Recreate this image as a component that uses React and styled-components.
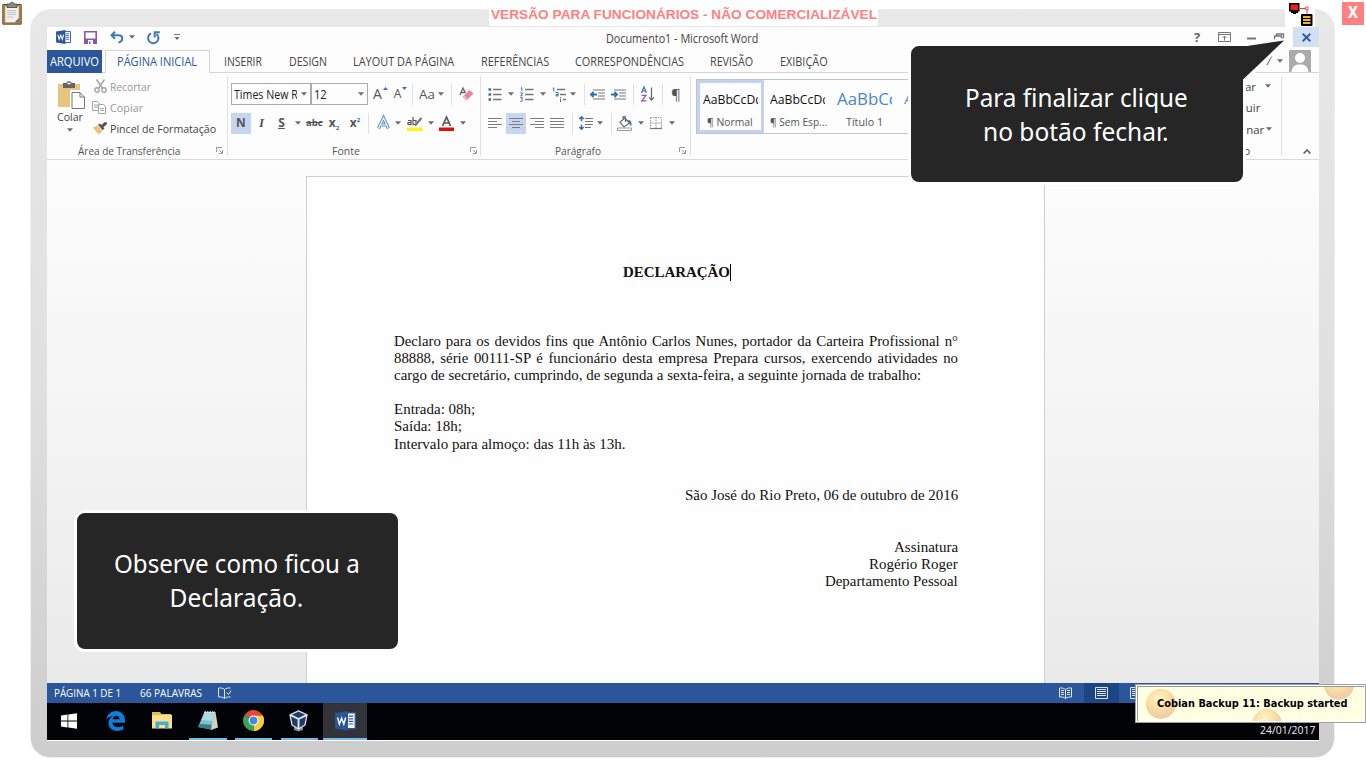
import React, { useLayoutEffect, useRef } from "react";
import styled, { createGlobalStyle } from "styled-components";

const Global = createGlobalStyle`
  * { box-sizing: border-box; }
  body { margin: 0; background: #fff; overflow: hidden; font-family: "Open Sans", "Noto Sans", sans-serif; }
  svg { display: block; flex: none; overflow: visible; }
`;

/* ---------- text fitted to a fixed measure ---------- */
const FitBox = styled.span`
  display: block;
  flex: none;
  width: ${(p) => p.$w}px;
  margin-left: ${(p) => p.$gap || 0}px;
  font-size: ${(p) => p.$size || 12}px;
  color: ${(p) => p.$color || "inherit"};
  white-space: nowrap;
`;
const FitInner = styled.span`
  display: inline-block;
  transform-origin: 0 50%;
`;
function Fit({ w, gap, size, color, children }) {
  const ref = useRef(null);
  useLayoutEffect(() => {
    const el = ref.current;
    el.style.transform = `scaleX(${w / el.offsetWidth})`;
  }, [w]);
  return (
    <FitBox $w={w} $gap={gap} $size={size} $color={color}>
      <FitInner ref={ref}>{children}</FitInner>
    </FitBox>
  );
}

/* ---------- frame ---------- */
const Desktop = styled.div`
  position: relative;
  width: 1366px;
  height: 768px;
  padding: 9px 31px 10px 30px;
  background: #fff;
  overflow: hidden;
`;
const Bezel = styled.div`
  height: 749px;
  padding: 17px 15px 16px 16px;
  border: 1px solid #efefef;
  border-radius: 20px;
  background: linear-gradient(#e8e8e8, #e0e0e0 50%, #cdcdcd);
`;
const Screen = styled.div`
  display: flex;
  flex-direction: column;
  width: 1272px;
  height: 714px;
  background: #fdfdfd;
  border-bottom: 1px solid #fff;
`;
const Row = styled.div`
  display: flex;
  align-items: center;
  height: ${(p) => p.$h || 22}px;
  margin-top: ${(p) => p.$top || 0}px;
`;
const Slot = styled.span`
  display: flex;
  flex: none;
  align-items: center;
  justify-content: center;
  width: ${(p) => p.$w}px;
  height: ${(p) => p.$h || 22}px;
  margin-left: ${(p) => p.$gap || 0}px;
  background: ${(p) => p.$bg || "transparent"};
`;
const Rule = styled.i`
  flex: none;
  width: 1px;
  height: ${(p) => p.$h || 21}px;
  margin-left: ${(p) => p.$gap}px;
  background: #e1e1e1;
`;
const Caret = styled.i`
  flex: none;
  width: 6px;
  height: 3.5px;
  margin-left: ${(p) => p.$gap || 0}px;
  margin-right: -1px;
  background: #6d6d6d;
  clip-path: polygon(0 0, 100% 0, 50% 100%);
`;
const Spacer = styled.span`
  flex: 1;
`;

/* ---------- title bar and tabs ---------- */
const TitleBar = styled.header`
  display: flex;
  align-items: center;
  height: 23px;
  padding-bottom: 3px;
  color: #444;
`;
const TitleText = styled.div`
  padding-top: 3px;
`;
const Help = styled.b`
  width: 10px;
  margin-left: 436px;
  font-size: 13px;
  line-height: 18px;
  color: #666;
`;
const CloseCell = styled.span`
  display: flex;
  align-items: center;
  justify-content: center;
  width: 26px;
  height: 20px;
  margin-left: auto;
  background: #d3e0f3;
`;
const Tabs = styled.nav`
  display: flex;
  height: 23px;
  color: #444;
  align-items: center;
  border-bottom: 1px solid #d5d5d5;
`;
const FileTab = styled.div`
  width: 55px;
  height: 23px;
  padding: 3px 0 0 3px;
  margin-bottom: -1px;
  background: #2b579a;
  color: #fff;
`;
const ActiveTab = styled.div`
  width: 105px;
  height: 23px;
  margin: 0 0 -1px 3px;
  padding: 2px 0 0 11px;
  border: 1px solid #d5d5d5;
  border-bottom: 0;
  background: #fdfdfd;
  color: #2b579a;
`;
const Avatar = styled.span`
  width: 22px;
  height: 22px;
  margin-left: 7px;
  margin-right: 8px;
  background: #ababab;
`;

/* ---------- ribbon ---------- */
const Ribbon = styled.section`
  display: flex;
  height: 87px;
  border-bottom: 1px solid #d9d9d9;
  color: #555;
`;
const Group = styled.div`
  flex: none;
  width: ${(p) => p.$w}px;
  height: 80px;
  margin-top: 3px;
  border-right: 1px solid ${(p) => (p.$open ? "transparent" : "#e1e1e1")};
`;
const Clip = styled.div`
  display: flex;
  height: 65px;
`;
const Paste = styled.div`
  display: flex;
  flex-direction: column;
  width: 45px;
  padding-top: 4px;
  color: #444;
`;
const ClipList = styled.div`
  display: flex;
  flex-direction: column;
`;
const Combo = styled.span`
  display: flex;
  align-items: center;
  flex: none;
  width: ${(p) => p.$w}px;
  height: 22px;
  margin-left: ${(p) => p.$gap}px;
  padding-left: 2px;
  border: 1px solid #ababab;
  color: #222;
`;
const Cut = styled.span`
  display: block;
  overflow: hidden;
  width: ${(p) => p.$w}px;
`;
const Glyph = styled.span`
  flex: none;
  display: block;
  width: ${(p) => p.$w}px;
  margin-left: ${(p) => p.$gap || 0}px;
  font: ${(p) => p.$font || '14px "Open Sans", sans-serif'};
  line-height: 20px;
  text-align: center;
  white-space: nowrap;
  color: ${(p) => p.$color || "#555"};
  text-decoration: ${(p) => p.$deco || "none"};
  sub, sup { font-size: 6px; color: #2b6cb0; line-height: 0; }
`;
const Gallery = styled.div`
  display: flex;
  width: 480px;
  height: 55px;
  margin: 3px 0 0 5px;
  border: 1px solid #bfc5cf;
`;
const StyleCell = styled.div`
  flex: none;
  width: 67px;
  height: 53px;
  border: ${(p) => (p.$active ? "3px solid #c3d3ee" : "0 solid transparent")};
  padding: ${(p) => (p.$active ? "5px 0 0 3px" : "8px 0 0 6px")};
`;
const Sample = styled.div`
  overflow: hidden;
  width: 55px;
  height: 23px;
  line-height: 23px;
  color: ${(p) => p.$color || "#111"};
`;
const StyleName = styled.div`
  padding-left: ${(p) => p.$pad || 0}px;
  line-height: 18px;
  margin-top: 2px;
`;
const EditGroup = styled.div`
  flex: none;
  width: 105px;
  height: 80px;
  margin-top: 3px;
  border-right: 1px solid #e1e1e1;
  color: #444;
`;

/* ---------- document ---------- */
const Workspace = styled.main`
  display: flex;
  height: 523px;
  padding: 16px 0 0 259px;
  background: linear-gradient(#fdfdfd, #f5f5f5 45%, #eaeaea);
`;
const Page = styled.article`
  width: 739px;
  height: 507px;
  padding: 87px 86px 0 87px;
  border: 1px solid #cfcfcf;
  border-bottom: 0;
  background: #fefefe;
  font-family: "Liberation Serif", serif;
  color: #111;
`;
const Line = styled.div`
  display: flex;
  align-items: center;
  justify-content: ${(p) => p.$align || "flex-start"};
  height: 17.16px;
  line-height: 17px;
  font-weight: ${(p) => (p.$bold ? 700 : 400)};
`;
const Justified = styled.div`
  height: 17.16px;
  line-height: 17px;
  font-size: 14.8px;
  text-align-last: justify;
  white-space: nowrap;
`;
const TextCursor = styled.i`
  width: 1px;
  height: 17px;
  background: #000;
`;

/* ---------- status bar and taskbar ---------- */
const Status = styled.footer`
  display: flex;
  align-items: center;
  height: 20px;
  padding-bottom: 1px;
  background: #2b579a;
  color: #fff;
`;
const ViewSlot = styled(Slot)`
  margin-bottom: -1px;
`;
const Taskbar = styled.footer`
  display: flex;
  height: 37px;
  background: #020307;
`;
const Task = styled.span`
  display: flex;
  align-items: center;
  justify-content: center;
  width: ${(p) => p.$w}px;
  padding-right: ${(p) => p.$shift || 0}px;
  margin-left: ${(p) => p.$gap || 0}px;
  background: ${(p) => (p.$active ? "#323439" : "transparent")};
  border-bottom: 2px solid ${(p) => (p.$run ? "#76b9ed" : "transparent")};
`;
const Clock = styled.div`
  margin-left: auto;
  padding: 19px 4px 0 0;
  color: #eee;
  line-height: 16px;
`;

/* ---------- overlays ---------- */
const Banner = styled.div`
  position: absolute;
  left: 489px;
  top: 6px;
  width: 389px;
  height: 20px;
  padding-left: 2px;
  background: #fff;
  font: 700 14px/17px "Liberation Sans", sans-serif;
  color: #ff8080;
`;
const Corner = styled.div`
  position: absolute;
  left: ${(p) => p.$x}px;
  top: ${(p) => p.$y}px;
  width: ${(p) => p.$w}px;
  height: ${(p) => p.$h}px;
  background: ${(p) => p.$bg || "transparent"};
  color: #fff;
  font: 700 15px/22px "DejaVu Sans Condensed", "DejaVu Sans", sans-serif;
  text-align: center;
`;
const Callout = styled.aside`
  position: absolute;
  left: ${(p) => p.$x}px;
  top: ${(p) => p.$y}px;
  width: ${(p) => p.$w}px;
  height: ${(p) => p.$h}px;
  display: flex;
  flex-direction: column;
  align-items: center;
  padding-top: ${(p) => p.$pad}px;
  padding-right: 2px;
  border: 3px solid #fff;
  border-radius: 11px;
  background: #262626;
  color: #fff;
  font-family: "Noto Sans", "Open Sans", sans-serif;
  font-variant-ligatures: common-ligatures;
  line-height: 33.5px;
`;
const Tail = styled.svg`
  position: absolute;
  left: 1230px;
  top: 36px;
`;
const Notice = styled.div`
  position: absolute;
  left: 1135px;
  top: 684px;
  width: 231px;
  height: 39px;
  border: 1px solid #a0a0a0;
  background: #fff;
  padding: 1px;
`;
const NoticeBody = styled.div`
  position: relative;
  display: flex;
  align-items: center;
  height: 35px;
  padding: 0 0 1px 19px;
  overflow: hidden;
  border-top: 1px solid #999;
  border-left: 1px solid #999;
  background: #ffffe1;
  color: #000;
  font-family: "DejaVu Sans", sans-serif;
  font-weight: 700;
`;
const Ball = styled.i`
  position: absolute;
  left: ${(p) => p.$x}px;
  top: ${(p) => p.$y}px;
  width: 30px;
  height: 30px;
  border-radius: 50%;
  background: radial-gradient(circle at 42% 32%, #fff6cc, #fbe0a4 35%, #efd0a8 65%, #e2cebf);
`;
const Above = styled.div`
  position: relative;
`;

/* ---------- icons ---------- */
const WordIcon = ({ s = 15 }) => (
  <svg width={s} height={s * 0.93} viewBox="0 0 16 15">
    <path d="M8 1.500h7.500v12H8z" fill="#fff" stroke="#2b579a" />
    <path d="M10.500 4h3.500M10.500 6h3.500M10.500 8h3.500M10.500 10h3.500" stroke="#2b579a" strokeWidth=".9" />
    <path d="M0 1.500L10 0v15L0 13.500z" fill="#2b579a" />
    <path d="M1.900 5L3.300 10 5 5.500 6.700 10 8.100 5" fill="none" stroke="#fff" strokeWidth="1.100" />
  </svg>
);
const SaveIcon = () => (
  <svg width="13" height="13" viewBox="0 0 13 13">
    <path d="M.8.8h11.4v11.4H.8z" fill="#fff" stroke="#8a56ac" strokeWidth="1.600" />
    <path d="M1 7.500h11v4.700H1z" fill="#8a56ac" />
    <path d="M4 9h5v4H4z" fill="#fff" />
    <path d="M5 10.500h1.500V13H5z" fill="#8a56ac" />
  </svg>
);
const UndoIcon = () => (
  <svg width="14" height="13" viewBox="0 0 14 13" fill="none" stroke="#3f78b5" strokeWidth="2">
    <path d="M5 .8L1.500 4.300 5 7.800M2 4.300h6.500c5 0 5 6 0 7.200" />
  </svg>
);
const RedoIcon = () => (
  <svg width="14" height="13" viewBox="0 0 14 13" fill="none" stroke="#3f78b5" strokeWidth="2">
    <path d="M4 2.400A5.200 5.200 0 1 0 9.500 3M7.700 6.500V1.300H12.800" />
  </svg>
);
const ListIcon = ({ kind }) => (
  <svg width="14" height="15" viewBox="0 0 14 15">
    <path
      d={kind === "multi" ? "M5 2.500h8M8 7.500h6M11 12.500h3" : "M5 2.500h8.500M5 7.500h8.500M5 12.500h8.500"}
      stroke="#777" strokeWidth="1.300" />
    {kind === "bullet" && <path d="M.5 1.200h2.600v2.600H.5zM.5 6.200h2.600v2.600H.5zM.5 11.200h2.600v2.600H.5z" fill="#3b6ea8" />}
    {kind === "number" && (
      <path d="M.8 1.200l1-.6v3.400M.3 5.800h2v1.500l-1.700 1.500h2M.3 10.700h2.200L1.500 12.200l1 .6-.6 1.500H.3" fill="none" stroke="#3b6ea8" />
    )}
    {kind === "multi" && (
      <path d="M.8 1.500l1-.7v3.700M4 5.500h2v3.500H4V7.500h2M8.500 10v1M8.500 12v3" fill="none" stroke="#3b6ea8" />
    )}
  </svg>
);
const AlignIcon = ({ d }) => (
  <svg width="14" height="12" viewBox="0 0 14 12" stroke="#7d7d7d" strokeWidth="1.200">
    <path d={d} />
  </svg>
);
const IndentIcon = ({ right }) => (
  <svg width="15" height="11" viewBox="0 0 15 11" fill="none">
    <path d="M3 1h12M8 4h7M8 7h7M3 10h12" stroke="#777" strokeWidth="1.200" />
    <path d={right ? "M0 5.500h6M3.500 3L6 5.500 3.500 8" : "M7 5.500H1M3.500 3L1 5.500 3.500 8"} stroke="#2f6fb0" strokeWidth="1.900" />
  </svg>
);
const SortIcon = () => (
  <svg width="14" height="16" viewBox="0 0 14 16" fill="none">
    <path d="M.5 7L3 .8 5.500 7M1.300 5h3.400" stroke="#3b6ea8" strokeWidth="1.200" />
    <path d="M.8 9.300h4.200L.8 14.800h4.500" stroke="#9b4fb0" strokeWidth="1.300" />
    <path d="M10.500 1.500V14M8 11.300l2.500 2.700 2.500-2.700" stroke="#666" strokeWidth="1.200" />
  </svg>
);
const SpacingIcon = () => (
  <svg width="14" height="14" viewBox="0 0 14 14" fill="none">
    <path d="M6 2.500h8M6 5.500h8M6 8.500h8M6 11.500h6" stroke="#777" strokeWidth="1.200" />
    <path d="M2.500.8v4.500M.3 3L2.500.8 4.700 3M2.500 13.200V8.700M.3 11l2.200 2.200L4.700 11" stroke="#2f6fb0" strokeWidth="1.500" />
  </svg>
);
const BucketIcon = () => (
  <svg width="16" height="15" viewBox="0 0 16 15" fill="none">
    <path d="M3 6l5-4 4.500 5-5.500 4zM6 4V1.500c0-1.500 2.500-1.500 2.500 0V6" stroke="#666" strokeWidth="1.200" />
    <path d="M11 4c3 0 4 2.500 3.300 6-1-.5-1.800-1.500-1.800-3z" fill="#3b6ea8" />
    <path d="M.5 12h14v2.500H.5z" stroke="#999" />
  </svg>
);
const BordersIcon = () => (
  <svg width="12" height="12" viewBox="0 0 12 12" fill="none">
    <path d="M.5.5h11v11M.5.5v11M6 0v11M0 6h12" stroke="#999" strokeDasharray="1.500 1" />
    <path d="M0 11.500h12" stroke="#777" strokeWidth="1.200" />
  </svg>
);
const EraserIcon = () => (
  <svg width="15" height="15" viewBox="0 0 15 15" fill="none">
    <path d="M1 8L4 1l2.500 5M2 5.500h4" stroke="#666" strokeWidth="1.300" />
    <path d="M3.500 10L10.500 3l4 3.500-7 7z" fill="#e7849b" />
    <path d="M3.500 10L5.300 8.200l3.700 4-1.500 1.300z" fill="#f4b9c6" />
  </svg>
);
const PasteIcon = () => (
  <svg width="27" height="28" viewBox="0 0 27 28" fill="none">
    <path d="M0 3h22v23H0z" fill="#e9c47c" />
    <path d="M5 2h3.500c0-2.500 5-2.500 5 0H17v5H5z" fill="#656565" />
    <path d="M9.500 2.500h3" stroke="#fff" strokeWidth="1.500" />
    <path d="M13.500 10.500h8l5 5v12h-13z" fill="#fff" stroke="#fff" strokeWidth="3" />
    <path d="M14 11.500h8l4.500 4.500v11.500H14z" fill="#fff" stroke="#777" />
    <path d="M22 11.500V16h4.500" stroke="#777" />
  </svg>
);
const ScissorsIcon = () => (
  <svg width="13" height="14" viewBox="0 0 13 14" fill="none" stroke="#a4a4a4" strokeWidth="1.400">
    <path d="M2.500.5l6 8.500M10.500.5l-6 8.500" />
    <circle cx="3" cy="11" r="2.200" />
    <circle cx="10" cy="11" r="2.200" />
  </svg>
);
const CopyIcon = () => (
  <svg width="14" height="13" viewBox="0 0 14 13" fill="#fff" stroke="#a4a4a4">
    <path d="M.5.5h5l2 2v7h-7zM2 4h4M2 6h4" />
    <path d="M6.500 3.500h5l2 2v7h-7zM8 7.500h4M8 9.500h4" />
  </svg>
);
const BrushIcon = () => (
  <svg width="15" height="13" viewBox="0 0 15 13">
    <path d="M0 5.500l4.500-2L9.500 9 6 12.500 3.500 10z" fill="#ecc07a" />
    <path d="M5 2.800l2-1.300 4.500 5L9.700 8.300z" fill="#555" />
    <path d="M9.500 4L12.500 1.500" stroke="#555" strokeWidth="3" strokeLinecap="round" />
  </svg>
);
const LauncherIcon = () => (
  <svg width="7" height="7" viewBox="0 0 7 7" fill="none" stroke="#999">
    <path d="M.5 5V.5H6M3 3l3 3M6.500 3v3.500H3" />
  </svg>
);
const BookIcon = ({ check }) => (
  <svg width="13" height="12" viewBox="0 0 13 12" fill="none" stroke="#dce5f2">
    {check ? (
      <path d="M6.500 2.500C5 1 2.500.8.500 1v9c2-.2 4.500 0 6 1.500zM6.500 2.500C8 1 10.500.8 12.500 1M6.500 11.500C8 10 10.500 9.800 12.500 10M8.500 5.500l2 2 2.500-4" />
    ) : (
      <path d="M6.500 2.500C5 1 2.500.8.500 1v9c2-.2 4.500 0 6 1.500zM6.500 2.500C8 1 10.500.8 12.500 1v9c-2-.2-4.500 0-6 1.500M2 3.500h3M2 5.500h3M2 7.500h3M8 3.500h3M8 5.500h3M8 7.500h3" />
    )}
  </svg>
);
const PrintIcon = () => (
  <svg width="13" height="12" viewBox="0 0 13 12" fill="none" stroke="#dce5f2">
    <path d="M.5.500h12v11H.5zM2 2.500h9M2 4.500h9M2 6.500h9M2 8.500h9" />
  </svg>
);
const WindowsIcon = () => (
  <svg width="16" height="16" viewBox="0 0 16 16" fill="#fff">
    <path d="M0 2.400l6.500-.9v6.100H0zM7.300 1.400L16 .2v7.400H7.300zM0 8.400h6.500v6.100L0 13.600zM7.300 8.400H16v7.400l-8.700-1.200z" />
  </svg>
);
const EdgeIcon = () => (
  <svg width="19" height="20" viewBox="0 0 19 20">
    <path d="M.2 8.800C1 3.500 4.800 0 9.900 0 15.500 0 19 4 19 9.300v2.500H6.500c.3 4.800 6.200 5.500 10.800 2.700v4c-5.800 3-14.500 1.500-14.800-6.200-.1-3.200 1.700-5.900 4.600-7.100C3.900 5.300 1.500 6.600.2 8.800zM6.600 8.200h7c0-4.600-6.300-4.600-7 0z" fill="#0a7fdc" />
  </svg>
);
const FolderIcon = () => (
  <svg width="20" height="17" viewBox="0 0 20 17">
    <path d="M0 0h8l1.500 2H19v6H0z" fill="#e8b94e" />
    <path d="M0 3h20v13.500H0z" fill="#fbe08c" />
    <path d="M3.500 9.500h13v7h-3.500v-3.500H7v3.500H3.500z" fill="#3fb0d8" />
  </svg>
);
const NotepadIcon = () => (
  <svg width="22" height="20" viewBox="0 0 22 20">
    <path d="M8 1.500L18.500 1 21 16.500 14 19z" fill="#d8d2b4" />
    <path d="M7.500 1h10.500L14 18.500 1 16z" fill="#7fbfca" />
    <path d="M7.500 1h10.500l-2.500 9-11-1z" fill="#a9dbe0" />
    <path d="M2.500 13l12.300.800L14 18.500 1 16z" fill="#357d8a" />
    <path d="M7.500 1h10.500" stroke="#eee" strokeWidth="1.500" strokeDasharray="1.500 1" />
  </svg>
);
const ChromeIcon = () => (
  <svg width="21" height="21" viewBox="0 0 20 20">
    <path d="M10 10L1.340 5A10 10 0 0 1 18.660 5z" fill="#e2493a" />
    <path d="M10 10L18.660 5A10 10 0 0 1 10 20z" fill="#fbcf3b" />
    <path d="M10 10L10 20A10 10 0 0 1 1.340 5z" fill="#3aa457" />
    <path d="M10 5.500h8.900a10 10 0 0 1-8.900 14.500l4-8z" fill="#fbcf3b" />
    <circle cx="10" cy="10" r="4.700" fill="#fff" />
    <circle cx="10" cy="10" r="3.700" fill="#4586ee" />
  </svg>
);
const BoxIcon = () => (
  <svg width="19" height="22" viewBox="0 0 19 22" strokeLinejoin="round">
    <path d="M5 16h9v4l-4.500 1.500L5 20z" fill="#7c889e" />
    <path d="M9.500.8l8.500 4-2 10.200-6.500 4L3 15 1 4.800z" fill="#1d3c6c" stroke="#d5deea" strokeWidth="1.300" />
    <path d="M1 4.800l8.500 4.200 8.500-4.200M9.500 9v10" fill="none" stroke="#e5ebf2" strokeWidth="1.900" />
  </svg>
);
const ClipboardIcon = () => (
  <svg width="20" height="23" viewBox="0 0 20 23">
    <path d="M.8 2.500h18.400v19.700H.8z" fill="#b98535" stroke="#6e4f22" />
    <path d="M3 4h14v16.500H3z" fill="#f0f0ee" stroke="#999" strokeWidth=".6" />
    <path d="M5 2h3c0-2.300 4-2.300 4 0h3v3.500H5z" fill="#8a8a88" stroke="#444" strokeWidth=".8" />
    <path d="M5 8.500h9M5 10.500h9M5 12.500h9M5 15h6" stroke="#c4c4c4" />
    <path d="M12.500 20.500L17 16v4.500z" fill="#6b6b6b" />
  </svg>
);
const NetworkIcon = () => (
  <svg width="30" height="27" viewBox="0 0 30 27">
    <path d="M4 3h10.500v8.500H4zM8 11h3v3H8zM6 11.500h7v1.500H6z" fill="#000" />
    <path d="M5.500 4.500h7.500v5.500H5.500z" fill="#ed1c24" />
    <path d="M14.500 8.500H22v5" fill="none" stroke="#e33" />
    <path d="M20.500 7h2.600v2.600h-2.600z" fill="#fff" stroke="#e33" strokeWidth=".8" />
    <rect x="16" y="14" width="11.500" height="12" rx="1" fill="#000" />
    <path d="M18 17h7.500M18 20h7.500M18 23h7.500" stroke="#e8b72c" strokeWidth="2" />
  </svg>
);

function GroupLabel({ gap, w, launch, children }) {
  return (
    <Row $h={15}>
      <Fit w={w} gap={gap} size={10.5}>{children}</Fit>
      {launch ? <Slot $gap={launch} $w={7} $h={9}><LauncherIcon /></Slot> : null}
    </Row>
  );
}

function Title() {
  return (
    <TitleBar>
      <Slot $gap={9} $w={15}><WordIcon /></Slot>
      <Slot $gap={13} $w={13}><SaveIcon /></Slot>
      <Slot $gap={13} $w={14}><UndoIcon /></Slot>
      <Caret $gap={5} />
      <Slot $gap={13} $w={14}><RedoIcon /></Slot>
      <Slot $gap={13} $w={6}>
        <svg width="6" height="6" viewBox="0 0 6 6"><path d="M0 .5h6" stroke="#777" /><path d="M.5 3h5L3 6z" fill="#666" /></svg>
      </Slot>
      <TitleText><Fit w={152} gap={426} size={12}>Documento1 - Microsoft Word</Fit></TitleText>
      <Help>?</Help>
      <Slot $gap={14} $w={13}>
        <svg width="13" height="10" viewBox="0 0 13 10" fill="none" stroke="#777"><path d="M.5.5h12v9H.5zM.5 2.500h12M6.500 8.500V4.500M4.500 6l2-2 2 2" /></svg>
      </Slot>
      <Slot $gap={16} $w={9}>
        <svg width="9" height="5" viewBox="0 0 9 5"><path d="M0 3.500h9" stroke="#777" strokeWidth="2" /></svg>
      </Slot>
      <Slot $gap={18} $w={10}>
        <svg width="10" height="9" viewBox="0 0 10 9" fill="none" stroke="#777" strokeWidth="1.300"><path d="M.5 3h7v5h-7zM2.500 3V1h7v4.500h-2" /></svg>
      </Slot>
      <CloseCell>
        <svg width="9" height="9" viewBox="0 0 9 9" stroke="#2f5fa8" strokeWidth="2"><path d="M.7.7l7.600 7.600M8.300.7L.7 8.300" /></svg>
      </CloseCell>
    </TitleBar>
  );
}

function TabStrip() {
  return (
    <Tabs>
      <FileTab><Fit w={49}>ARQUIVO</Fit></FileTab>
      <ActiveTab><Fit w={80}>PÁGINA INICIAL</Fit></ActiveTab>
      <Fit w={38} gap={14}>INSERIR</Fit>
      <Fit w={38} gap={27}>DESIGN</Fit>
      <Fit w={101} gap={26}>LAYOUT DA PÁGINA</Fit>
      <Fit w={68} gap={27}>REFERÊNCIAS</Fit>
      <Fit w={109} gap={26}>CORRESPONDÊNCIAS</Fit>
      <Fit w={43} gap={26}>REVISÃO</Fit>
      <Fit w={48} gap={27}>EXIBIÇÃO</Fit>
      <Spacer />
      <Glyph $w={6} $font='italic 12px "Open Sans", sans-serif'>/</Glyph>
      <Caret $gap={5} />
      <Avatar>
        <svg width="22" height="22" viewBox="0 0 22 22" fill="#fff">
          <circle cx="11" cy="8" r="5" />
          <path d="M2.500 22c.5-5 3-7.500 8.500-7.500s8 2.500 8.500 7.500z" />
        </svg>
      </Avatar>
    </Tabs>
  );
}

function RibbonBar() {
  return (
    <Ribbon>
      <Group $w={181}>
        <Clip>
          <Paste>
            <Slot $gap={11} $w={27} $h={29}><PasteIcon /></Slot>
            <Fit w={26} gap={10} size={11}>Colar</Fit>
            <Row $h={12}><Caret $gap={20} /></Row>
          </Paste>
          <ClipList>
            <Row $h={20}><Slot $gap={2} $w={13}><ScissorsIcon /></Slot><Fit w={41} gap={3} size={11.5} color="#999">Recortar</Fit></Row>
            <Row $h={22}><Slot $w={14}><CopyIcon /></Slot><Fit w={33} gap={4} size={11.5} color="#999">Copiar</Fit></Row>
            <Row $h={21}><Slot $gap={1} $w={15}><BrushIcon /></Slot><Fit w={106} gap={2} size={11.5} color="#444">Pincel de Formatação</Fit></Row>
          </ClipList>
        </Clip>
        <Row $h={2} />
        <GroupLabel w={102} gap={31} launch={36}>Área de Transferência</GroupLabel>
      </Group>

      <Group $w={253}>
        <Row $top={7}>
          <Combo $gap={3} $w={80}><Cut $w={63}><Fit w={70}>Times New Ro</Fit></Cut><Caret $gap={4} /></Combo>
          <Combo $gap={0} $w={57}><Fit w={13}>12</Fit><Caret $gap={31} /></Combo>
          <Glyph $gap={4} $w={11}>A</Glyph><svg width="5" height="14" viewBox="0 0 5 14"><path d="M0 3l2.500-3L5 3z" fill="#3b6ea8" /></svg>
          <Glyph $gap={5} $w={9} $font='12px "Open Sans"'>A</Glyph><svg width="5" height="14" viewBox="0 0 5 14"><path d="M0 0l2.500 3L5 0z" fill="#3b6ea8" /></svg>
          <Rule $gap={5} />
          <Fit w={16} gap={6} size={12.5}>Aa</Fit><Caret $gap={3} />
          <Rule $gap={8} />
          <Slot $gap={7} $w={15}><EraserIcon /></Slot>
        </Row>
        <Row $top={7}>
          <Slot $gap={3} $w={20} $h={21} $bg="#c6d5f0"><Glyph $w={16} $font='700 12px "Open Sans"'>N</Glyph></Slot>
          <Glyph $gap={5} $w={11} $font='italic 700 13px "Liberation Serif"'>I</Glyph>
          <Glyph $gap={10} $w={9} $deco="underline" $font='700 12px "Open Sans"'>S</Glyph>
          <Caret $gap={9} />
          <Slot $gap={6} $w={16}><Glyph $w={16} $deco="line-through" $font='700 9.5px "Open Sans"'>abc</Glyph></Slot>
          <Glyph $gap={6} $w={12} $font='700 12px "Open Sans"'>x<sub>2</sub></Glyph>
          <Glyph $gap={9} $w={12} $font='700 12px "Open Sans"'>x<sup>2</sup></Glyph>
          <Rule $gap={7} />
          <Slot $gap={8} $w={13}>
            <svg width="13" height="14" viewBox="0 0 13 14" fill="none"><path d="M1.500 12.500L6.500 2l5 10.500M3.500 9h6" stroke="#5b93cf" strokeWidth="3.200" /><path d="M1.500 12.500L6.500 2l5 10.500M3.500 9h6" stroke="#fff" strokeWidth="1.100" /></svg>
          </Slot>
          <Caret $gap={5} />
          <Slot $gap={7} $w={16}>
            <svg width="16" height="15" viewBox="0 0 16 15" fill="none"><path d="M0 11.500h15.500V15H0z" fill="#fbf51a" /><path d="M1 4.500h3v4H1V6.500h3M6 1v7.500h3v-4H6" stroke="#555" strokeWidth="1.200" /><path d="M8 9.500L14.500 2" stroke="#777" strokeWidth="2.200" /></svg>
          </Slot>
          <Caret $gap={5} />
          <Slot $gap={6} $w={15}>
            <svg width="15" height="15" viewBox="0 0 15 15" fill="none"><path d="M0 11.500h15V15H0z" fill="#e01010" /><path d="M3.500 10L7.500 1l4 9M5 7h5" stroke="#555" strokeWidth="1.700" /></svg>
          </Slot>
          <Caret $gap={6} />
        </Row>
        <Row $h={9} />
        <GroupLabel w={28} gap={104} launch={110}>Fonte</GroupLabel>
      </Group>

      <Group $w={210}>
        <Row $top={7}>
          <Slot $gap={7} $w={14}><ListIcon kind="bullet" /></Slot><Caret $gap={6} />
          <Slot $gap={7} $w={14}><ListIcon kind="number" /></Slot><Caret $gap={6} />
          <Slot $gap={7} $w={14}><ListIcon kind="multi" /></Slot><Caret $gap={4} />
          <Rule $gap={9} />
          <Slot $gap={5} $w={15}><IndentIcon /></Slot>
          <Slot $gap={6} $w={15}><IndentIcon right /></Slot>
          <Rule $gap={7} />
          <Slot $gap={7} $w={14}><SortIcon /></Slot>
          <Rule $gap={7} />
          <Glyph $gap={7} $w={12} $font='15px "Open Sans"'>¶</Glyph>
        </Row>
        <Row $top={7}>
          <Slot $gap={7} $w={14}><AlignIcon d="M0 1.500h14M0 4.500h9M0 7.500h14M0 10.500h9" /></Slot>
          <Slot $gap={4} $w={20} $h={21} $bg="#c6d5f0"><AlignIcon d="M0 1.500h14M3 4.500h8M0 7.500h14M3 10.500h8" /></Slot>
          <Slot $gap={4} $w={14}><AlignIcon d="M0 1.500h14M5 4.500h9M0 7.500h14M5 10.500h9" /></Slot>
          <Slot $gap={6} $w={14}><AlignIcon d="M0 1.500h14M0 4.500h14M0 7.500h14M0 10.500h14" /></Slot>
          <Rule $gap={8} />
          <Slot $gap={6} $w={14}><SpacingIcon /></Slot><Caret $gap={4} />
          <Rule $gap={9} />
          <Slot $gap={5} $w={16}><BucketIcon /></Slot><Caret $gap={5} />
          <Slot $gap={7} $w={12}><BordersIcon /></Slot><Caret $gap={7} />
        </Row>
        <Row $h={9} />
        <GroupLabel w={46} gap={74} launch={78}>Parágrafo</GroupLabel>
      </Group>

      <Group $w={486} $open>
        <Gallery>
          <StyleCell $active>
            <Sample><Fit w={60} size={12}>AaBbCcDd</Fit></Sample>
            <StyleName $pad={4}><Fit w={46} size={11}>¶ Normal</Fit></StyleName>
          </StyleCell>
          <StyleCell>
            <Sample><Fit w={60} size={12}>AaBbCcDd</Fit></Sample>
            <StyleName><Fit w={57} size={11}>¶ Sem Esp...</Fit></StyleName>
          </StyleCell>
          <StyleCell>
            <Sample $color="#4a86c5"><Fit w={60} size={16}>AaBbCc</Fit></Sample>
            <StyleName $pad={9}><Fit w={37} size={11}>Título 1</Fit></StyleName>
          </StyleCell>
          <StyleCell>
            <Sample $color="#4a86c5"><Fit w={9} size={13}>A</Fit></Sample>
          </StyleCell>
        </Gallery>
      </Group>

      <EditGroup>
        <Row $h={20}><Fit w={47} gap={32} size={11}>Localizar</Fit><Caret $gap={9} /></Row>
        <Row $h={23}><Fit w={51} gap={32} size={11}>Substituir</Fit></Row>
        <Row $h={20}><Fit w={55} gap={32} size={11}>Selecionar</Fit><Caret $gap={2} /></Row>
        <Row $h={4} />
        <GroupLabel w={34} gap={39}>Edição</GroupLabel>
      </EditGroup>
      <Row $h={20} $top={68}>
        <Slot $gap={20} $w={9}>
          <svg width="8" height="5" viewBox="0 0 8 5" fill="none" stroke="#666" strokeWidth="1.800"><path d="M.7 4.500L4 1l3.300 3.500" /></svg>
        </Slot>
      </Row>
    </Ribbon>
  );
}

function Document() {
  return (
    <Workspace>
      <Page>
        <Line $align="center" $bold><Fit w={107} gap={2} size={14.5}>DECLARAÇÃO</Fit><TextCursor /></Line>
        <Line /><Line /><Line />
        <Justified>Declaro para os devidos fins que Antônio Carlos Nunes, portador da Carteira Profissional n°</Justified>
        <Justified>88888, série 00111-SP é funcionário desta empresa Prepara cursos, exercendo atividades no</Justified>
        <Line><Fit w={527} size={15}>cargo de secretário, cumprindo, de segunda a sexta-feira, a seguinte jornada de trabalho:</Fit></Line>
        <Line />
        <Line><Fit w={81} size={15}>Entrada: 08h;</Fit></Line>
        <Line><Fit w={68} size={15}>Saída: 18h;</Fit></Line>
        <Line><Fit w={231} size={15}>Intervalo para almoço: das 11h às 13h.</Fit></Line>
        <Line /><Line />
        <Line $align="flex-end"><Fit w={273} size={15}>São José do Rio Preto, 06 de outubro de 2016</Fit></Line>
        <Line /><Line />
        <Line $align="flex-end"><Fit w={64} size={15}>Assinatura</Fit></Line>
        <Line $align="flex-end"><Fit w={89} size={15}>Rogério Roger</Fit></Line>
        <Line $align="flex-end"><Fit w={133} size={15}>Departamento Pessoal</Fit></Line>
      </Page>
    </Workspace>
  );
}

export default function App() {
  return (
    <>
      <Global />
      <Desktop>
        <Bezel>
          <Screen>
            <Title />
            <TabStrip />
            <RibbonBar />
            <Document />
            <Status>
              <Fit w={67} gap={7} size={11}>PÁGINA 1 DE 1</Fit>
              <Fit w={62} gap={19} size={11}>66 PALAVRAS</Fit>
              <Slot $gap={16} $w={13} $h={18}><BookIcon check /></Slot>
              <Slot $gap={828} $w={13} $h={18}><BookIcon /></Slot>
              <ViewSlot $gap={12} $w={35} $h={20} $bg="#1c4583"><PrintIcon /></ViewSlot>
              <Slot $gap={11} $w={13} $h={18}><PrintIcon /></Slot>
            </Status>
            <Taskbar>
              <Task $w={44}><WindowsIcon /></Task>
              <Task $gap={4} $w={44} $shift={3}><EdgeIcon /></Task>
              <Task $gap={1} $w={44}><FolderIcon /></Task>
              <Task $gap={5} $w={38} $run><NotepadIcon /></Task>
              <Task $gap={8} $w={37} $run><ChromeIcon /></Task>
              <Task $gap={9} $w={37} $run $shift={3}><BoxIcon /></Task>
              <Task $gap={5} $w={44} $run $active><WordIcon s={21} /></Task>
              <Clock><Fit w={55} size={11}>24/01/2017</Fit></Clock>
            </Taskbar>
          </Screen>
        </Bezel>

        <Banner><Fit w={386} size={13.5}>VERSÃO PARA FUNCIONÁRIOS - NÃO COMERCIALIZÁVEL</Fit></Banner>
        <Corner $x={2} $y={2} $w={20} $h={23}><ClipboardIcon /></Corner>
        <Corner $x={1285} $y={0} $w={30} $h={27} $bg="#fff"><NetworkIcon /></Corner>
        <Corner $x={1342} $y={2} $w={22} $h={23} $bg="#ff8080">X</Corner>

        <Callout $x={908} $y={43} $w={338} $h={142} $pad={35}>
          <Fit w={223} size={24.5}>Para finalizar clique</Fit>
          <Fit w={186} size={24.5}>no botão fechar.</Fit>
        </Callout>
        <Tail width="60" height="50" viewBox="0 0 60 50">
          <path d="M13 10L16 7 55 2 57 5 15 47" fill="#fff" />
          <path d="M0 10H17L54 4.500 13 43.500 0 48z" fill="#262626" />
        </Tail>
        <Callout $x={74} $y={510} $w={327} $h={142} $pad={34}>
          <Fit w={246} size={24.5}>Observe como ficou a</Fit>
          <Fit w={134} size={24.5}>Declaração.</Fit>
        </Callout>

        <Notice>
          <NoticeBody>
            <Ball $x={8} $y={2} />
            <Ball $x={186} $y={-17} />
            <Ball $x={114} $y={22} />
            <Above><Fit w={191} size={11}>Cobian Backup 11: Backup started</Fit></Above>
          </NoticeBody>
        </Notice>
      </Desktop>
    </>
  );
}
